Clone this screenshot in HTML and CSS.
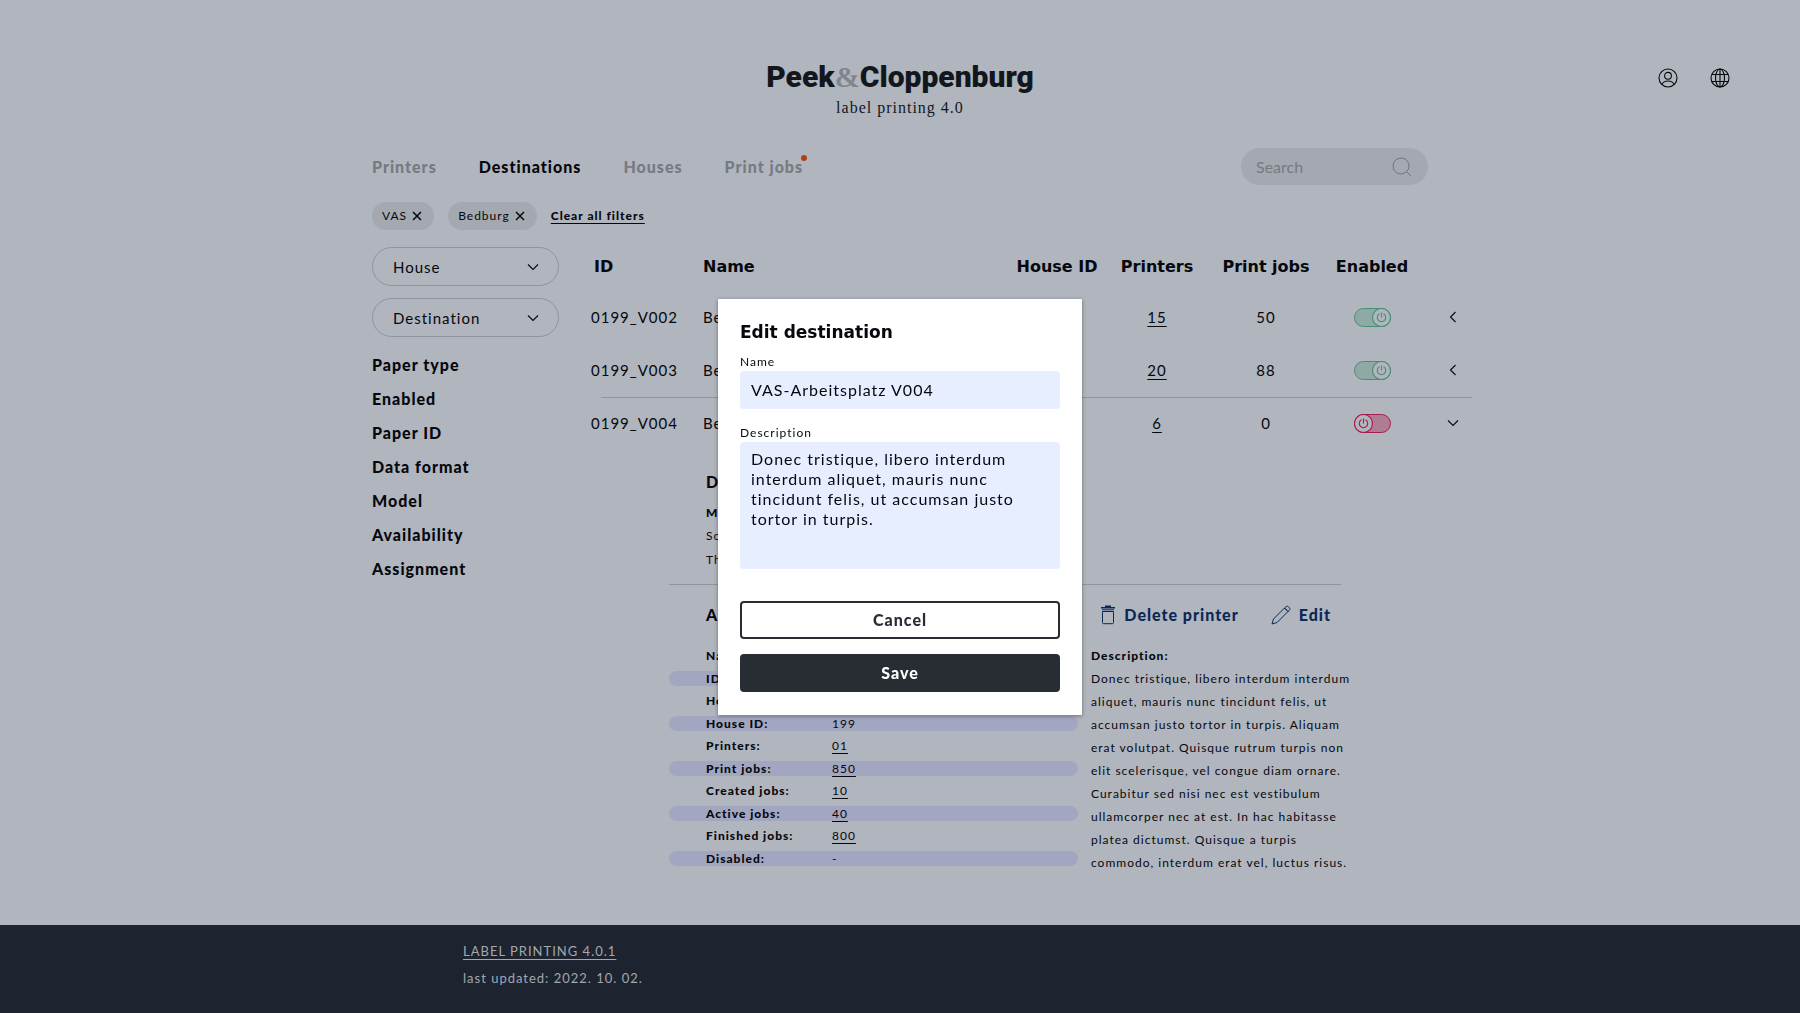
FILE: index.html
```html
<!DOCTYPE html>
<html lang="en">

<head>
    <meta charset="utf-8" />
    <meta name="viewport" content="width=device-width, initial-scale=1" />
    <title>Label printing 4.0</title>
    <link rel="stylesheet" href="styles.css">
</head>

<body>
    <header class="header">
        <div class="brand">
            <h1 class="logo">Peek<span class="amp">&amp;</span>Cloppenburg</h1>
            <p class="subtitle">label printing 4.0</p>
        </div>
        <div class="header-icons">
            <button class="icon-btn" aria-label="Account">
                <svg width="20" height="20" viewBox="0 0 20 20">
                    <circle cx="10" cy="10" r="9" />
                    <circle cx="10" cy="7.8" r="3.4" />
                    <path d="M4 16.6C5 14 7.3 13 10 13s5 1 6 3.6" />
                </svg>
            </button>
            <button class="icon-btn" aria-label="Language">
                <svg width="20" height="20" viewBox="0 0 20 20">
                    <circle cx="10" cy="10" r="9" />
                    <ellipse cx="10" cy="10" rx="4.5" ry="9" />
                    <path d="M10 1v18M2 6.5h16M2 13.5h16" />
                </svg>
            </button>
        </div>
    </header>

    <div class="container">
        <div class="topbar">
            <nav>
                <ul class="menu">
                    <li><a href="#">Printers</a></li>
                    <li><a href="#" class="active">Destinations</a></li>
                    <li><a href="#">Houses</a></li>
                    <li><a href="#" class="has-news">Print jobs</a></li>
                </ul>
            </nav>
            <div class="search">
                <input type="search" placeholder="Search" aria-label="Search">
                <svg width="20" height="20" viewBox="0 0 20 20">
                    <circle cx="9" cy="9" r="8" />
                    <path d="M14.5 14.5L19 19" />
                </svg>
            </div>
        </div>

        <div class="filters">
            <button class="chip">VAS <svg width="10" height="10" viewBox="0 0 10 10"><path d="M1 1l8 8M9 1l-8 8" /></svg></button>
            <button class="chip">Bedburg <svg width="10" height="10" viewBox="0 0 10 10"><path d="M1 1l8 8M9 1l-8 8" /></svg></button>
            <a href="#" class="clear">Clear all filters</a>
        </div>

        <div class="content">
            <aside class="sidebar">
                <div class="dropdown">
                    <select aria-label="House"><option>House</option></select>
                    <svg width="12" height="8" viewBox="0 0 12 8"><path d="M1 1.5l5 5 5-5" /></svg>
                </div>
                <div class="dropdown">
                    <select aria-label="Destination"><option>Destination</option></select>
                    <svg width="12" height="8" viewBox="0 0 12 8"><path d="M1 1.5l5 5 5-5" /></svg>
                </div>
                <ul class="facets">
                    <li>Paper type</li>
                    <li>Enabled</li>
                    <li>Paper ID</li>
                    <li>Data format</li>
                    <li>Model</li>
                    <li>Availability</li>
                    <li>Assignment</li>
                </ul>
            </aside>

            <main class="main">
                <table class="list">
                    <thead>
                        <tr>
                            <th class="col-id">ID</th>
                            <th class="col-name">Name</th>
                            <th class="col-house">House ID</th>
                            <th class="col-printers">Printers</th>
                            <th class="col-jobs">Print jobs</th>
                            <th class="col-enabled">Enabled</th>
                            <th class="col-open"></th>
                        </tr>
                    </thead>
                    <tbody>
                        <tr>
                            <td>0199_V002</td>
                            <td>Bedburg</td>
                            <td>199</td>
                            <td><a href="#">15</a></td>
                            <td>50</td>
                            <td>
                                <label class="toggle">
                                    <input type="checkbox" aria-label="Enabled" checked>
                                    <svg width="19" height="19" viewBox="0 0 19 19"><circle class="knob" cx="9.5" cy="9.5" r="9" /><path d="M7.5 5.8a4.2 4.2 0 1 0 4 0M9.5 4.5v5" /></svg>
                                </label>
                            </td>
                            <td><button class="open" aria-label="Open"><svg width="8" height="12" viewBox="0 0 8 12"><path d="M6.5 1l-5 5 5 5" /></svg></button></td>
                        </tr>
                        <tr>
                            <td>0199_V003</td>
                            <td>Bedburg</td>
                            <td>199</td>
                            <td><a href="#">20</a></td>
                            <td>88</td>
                            <td>
                                <label class="toggle">
                                    <input type="checkbox" aria-label="Enabled" checked>
                                    <svg width="19" height="19" viewBox="0 0 19 19"><circle class="knob" cx="9.5" cy="9.5" r="9" /><path d="M7.5 5.8a4.2 4.2 0 1 0 4 0M9.5 4.5v5" /></svg>
                                </label>
                            </td>
                            <td><button class="open" aria-label="Open"><svg width="8" height="12" viewBox="0 0 8 12"><path d="M6.5 1l-5 5 5 5" /></svg></button></td>
                        </tr>
                        <tr class="opened">
                            <td>0199_V004</td>
                            <td>Bedburg</td>
                            <td>199</td>
                            <td><a href="#">6</a></td>
                            <td>0</td>
                            <td>
                                <label class="toggle">
                                    <input type="checkbox" aria-label="Enabled">
                                    <svg width="19" height="19" viewBox="0 0 19 19"><circle class="knob" cx="9.5" cy="9.5" r="9" /><path d="M7.5 5.8a4.2 4.2 0 1 0 4 0M9.5 4.5v5" /></svg>
                                </label>
                            </td>
                            <td><button class="open down" aria-label="Close"><svg width="12" height="8" viewBox="0 0 12 8"><path d="M1 1.5l5 5 5-5" /></svg></button></td>
                        </tr>
                    </tbody>
                </table>

                <section class="details">
                    <div class="notice">
                        <h2>Disabled</h2>
                        <h3>Message:</h3>
                        <p>Scheduled</p>
                        <p>This week</p>
                    </div>

                    <div class="about-head">
                        <h2>About</h2>
                        <div class="actions">
                            <button>
                                <svg width="16" height="20" viewBox="0 0 16 20">
                                    <path d="M2.500 6.500v11a1.200 1.200 0 0 0 1.200 1.200h8.600a1.200 1.200 0 0 0 1.200-1.200v-11zM2 4.800h12" />
                                    <path class="lid" d="M1 2.800h14M5 1.300h6" />
                                </svg>
                                Delete printer
                            </button>
                            <button>
                                <svg width="20" height="20" viewBox="0 0 20 20">
                                    <path d="M1 19l1.500-5L13.500 3l3.500 3.500L6 17.500zM15 1.800c.8-.8 1.800-.8 2.500 0l.9.900c.7.700.7 1.700 0 2.500L17 6.500 13.500 3z" />
                                </svg>
                                Edit
                            </button>
                        </div>
                    </div>

                    <div class="about">
                        <dl class="facts">
                            <div><dt>Name:</dt><dd>VAS</dd></div>
                            <div><dt>ID:</dt><dd>004</dd></div>
                            <div><dt>House:</dt><dd>Bedburg</dd></div>
                            <div><dt>House ID:</dt><dd>199</dd></div>
                            <div><dt>Printers:</dt><dd><a href="#">01</a></dd></div>
                            <div><dt>Print jobs:</dt><dd><a href="#">850</a></dd></div>
                            <div><dt>Created jobs:</dt><dd><a href="#">10</a></dd></div>
                            <div><dt>Active jobs:</dt><dd><a href="#">40</a></dd></div>
                            <div><dt>Finished jobs:</dt><dd><a href="#">800</a></dd></div>
                            <div><dt>Disabled:</dt><dd>-</dd></div>
                        </dl>
                        <div class="description">
                            <h3>Description:</h3>
                            <p>Donec tristique, libero interdum interdum<br>
                                aliquet, mauris nunc tincidunt felis, ut<br>
                                accumsan justo tortor in turpis. Aliquam<br>
                                erat volutpat. Quisque rutrum turpis non<br>
                                elit scelerisque, vel congue diam ornare.<br>
                                Curabitur sed nisi nec est vestibulum<br>
                                ullamcorper nec at est. In hac habitasse<br>
                                platea dictumst. Quisque a turpis<br>
                                commodo, interdum erat vel, luctus risus.</p>
                        </div>
                    </div>
                </section>
            </main>
        </div>
    </div>

    <footer class="footer">
        <a href="#">LABEL PRINTING 4.0.1</a>
        <p>last updated: 2022. 10. 02.</p>
    </footer>

    <div class="overlay">
        <form class="modal" role="dialog" aria-labelledby="modal-title">
            <h2 id="modal-title">Edit destination</h2>
            <label for="name">Name</label>
            <input type="text" id="name" value="VAS-Arbeitsplatz V004">
            <label for="description">Description</label>
            <textarea id="description">Donec tristique, libero interdum interdum aliquet, mauris nunc tincidunt felis, ut accumsan justo tortor in turpis.</textarea>
            <button type="button" class="btn">Cancel</button>
            <button type="button" class="btn btn-dark">Save</button>
        </form>
    </div>
</body>

</html>
```

FILE: styles.css
```css
* {
    box-sizing: border-box;
}

body {
    margin: 0;
    min-height: 100vh;
    display: flex;
    flex-direction: column;
    background-color: #b1b5be;
    color: #05080d;
    font-family: Lato, "Noto Sans", sans-serif;
    font-size: 15px;
    line-height: 20px;
    letter-spacing: 1px;
}

h1,
h2,
h3,
p,
ul,
dl,
dd {
    margin: 0;
    padding: 0;
}

ul {
    list-style: none;
}

a {
    color: inherit;
    text-underline-offset: 3px;
}

button,
input,
select,
textarea {
    font: inherit;
    color: inherit;
    letter-spacing: inherit;
}

button {
    padding: 0;
    border: none;
    background: none;
    cursor: pointer;
}

svg {
    display: block;
    fill: none;
    stroke: currentColor;
    stroke-width: 1.1;
}

/* header */
.header {
    display: flex;
    justify-content: center;
    position: relative;
    padding-top: 56px;
}

.brand {
    text-align: center;
}

.logo {
    font-family: Roboto, sans-serif;
    font-size: 30px;
    font-weight: 900;
    line-height: 42px;
    letter-spacing: 0;
    color: #12171d;
}

.amp {
    font-family: "Liberation Serif", serif;
    font-weight: bold;
    color: #81868e;
}

.subtitle {
    font-family: "Liberation Serif", serif;
    font-size: 16px;
    color: #12171d;
}

.header-icons {
    position: absolute;
    top: 68px;
    right: 70px;
    display: flex;
    gap: 32px;
}

/* navigation and search */
.container {
    flex: 1;
    width: 1056px;
    max-width: 100%;
    margin: 0 auto;
    padding-top: 30px;
}

.topbar {
    display: flex;
    justify-content: space-between;
    align-items: center;
}

.menu {
    display: flex;
    gap: 42px;
}

.menu a {
    position: relative;
    font-size: 16px;
    font-weight: 900;
    color: #757a83;
    text-decoration: none;
}

.menu a.active {
    color: #05080d;
}

.has-news::after {
    content: "";
    position: absolute;
    top: -2px;
    right: -4px;
    width: 6px;
    height: 6px;
    border-radius: 50%;
    background-color: #b44012;
}

.search {
    display: flex;
    align-items: center;
    width: 187px;
    height: 37px;
    padding: 0 16px 0 15px;
    border-radius: 19px;
    background-color: #a4a8b0;
    color: #70757e;
}

.search input {
    flex: 1;
    min-width: 0;
    padding: 0;
    border: none;
    background: none;
    font-size: 16px;
    letter-spacing: 0;
}

.search input::placeholder {
    color: #757a83;
}

.search svg {
    stroke-width: 1;
}

.filters {
    display: flex;
    align-items: center;
    gap: 14px;
    margin-top: 17px;
    font-size: 12px;
}

.chip {
    display: flex;
    align-items: center;
    gap: 5px;
    height: 28px;
    padding: 0 12px 0 10px;
    border-radius: 14px;
    background-color: #a4a8b0;
}

.chip svg {
    stroke-width: 1.5;
}

.clear {
    font-weight: 900;
}

/* sidebar */
.content {
    display: flex;
    gap: 32px;
    margin-top: 17px;
}

.sidebar {
    width: 187px;
    flex-shrink: 0;
}

.dropdown {
    position: relative;
    margin-bottom: 12px;
}

.dropdown select {
    appearance: none;
    width: 100%;
    height: 39px;
    padding: 0 20px;
    border: 1px solid #90949d;
    border-radius: 20px;
    background: none;
}

.dropdown svg {
    position: absolute;
    top: 16px;
    right: 20px;
    pointer-events: none;
}

.facets {
    margin-top: -1px;
    font-size: 16px;
    font-weight: 900;
    line-height: 34px;
}

/* destinations table */
.main {
    flex: 1;
    margin-right: -44px;
}

.list {
    width: 100%;
    table-layout: fixed;
    border-collapse: collapse;
}

.list th {
    height: 43px;
    padding: 0 0 4px;
    font-family: "DejaVu Sans", sans-serif;
    font-size: 16px;
    font-weight: bold;
    letter-spacing: 0;
    white-space: nowrap;
}

.list .col-id {
    width: 112px;
    padding-left: 3px;
    text-align: left;
}

.list .col-name {
    text-align: left;
}

.col-house {
    width: 110px;
}

.col-printers {
    width: 90px;
}

.col-jobs {
    width: 128px;
}

.col-enabled {
    width: 84px;
}

.col-open {
    width: 58px;
}

.list td {
    height: 53px;
    padding: 0;
    text-align: center;
}

.list td:nth-child(-n+2) {
    text-align: left;
}

.opened {
    background: linear-gradient(#90949d, #90949d) 10px 1px / 100% 1px no-repeat;
}

.toggle {
    display: block;
    position: relative;
    width: 37px;
    height: 19px;
    margin: 2px auto 0;
    color: #a31f4e;
}

.toggle input {
    appearance: none;
    display: block;
    width: 37px;
    height: 19px;
    margin: 0;
    border: 1px solid #a31f4e;
    border-radius: 10px;
    background-color: #b07c94;
}

.toggle svg {
    position: absolute;
    top: 0;
    left: 0;
}

.knob {
    fill: #b1b5be;
}

.toggle:has(:checked) {
    color: #488f73;
}

.toggle input:checked {
    border-color: #488f73;
    background-color: #8faaa6;
}

.toggle input:checked + svg {
    left: auto;
    right: 0;
}

.open {
    display: block;
    margin: 0 15px 0 auto;
}

.open.down {
    margin-right: 13px;
}

/* opened destination */
.details {
    width: 672px;
    margin-left: 78px;
    font-size: 12px;
}

.details h2 {
    font-size: 16px;
    font-weight: 900;
}

.details h3 {
    font-size: 12px;
    line-height: 22px;
    font-weight: 900;
}

.notice {
    padding: 23px 37px 12px;
    border-bottom: 1px solid #90949d;
}

.notice h3 {
    margin-top: 10px;
}

.notice p {
    line-height: 24px;
}

.about-head {
    display: flex;
    justify-content: space-between;
    padding: 20px 10px 20px 37px;
}

.actions {
    display: flex;
    gap: 32px;
}

.actions button {
    display: flex;
    align-items: center;
    gap: 8px;
    font-size: 16px;
    font-weight: 900;
    color: #0a2858;
}

.actions svg {
    stroke-width: 1;
}

.actions .lid {
    stroke-width: 1.6;
}

.about {
    display: flex;
    gap: 13px;
}

.facts {
    flex: 0 0 409px;
}

.facts div {
    display: flex;
    height: 22px;
    padding-left: 37px;
    line-height: 22px;
}

.facts div:nth-child(even) {
    height: 15px;
    margin: 4px 0;
    border-radius: 8px;
    line-height: 15px;
    background-color: #a2a6c0;
}

.facts dt {
    width: 126px;
    font-weight: 900;
}

.description {
    line-height: 23px;
    white-space: nowrap;
}

/* footer */
.footer {
    height: 88px;
    padding: 16px 0 0 463px;
    background-color: #1d232f;
    color: #a2a7b0;
    font-size: 13px;
}

.footer p {
    margin-top: 7px;
}

/* edit dialog */
.overlay {
    position: fixed;
    inset: 0;
    display: flex;
    align-items: center;
    justify-content: center;
}

.modal {
    display: flex;
    flex-direction: column;
    width: 364px;
    padding: 23px 22px;
    background-color: #fff;
    box-shadow: 0 1px 4px rgba(0, 0, 0, 0.4);
}

.modal h2 {
    margin-bottom: 11px;
    font-family: "DejaVu Sans", sans-serif;
    font-size: 17px;
    letter-spacing: 0;
}

.modal label {
    font-size: 12px;
    line-height: 18px;
}

.modal input,
.modal textarea {
    padding: 7px 11px;
    border: none;
    border-radius: 4px;
    background-color: #e7eeff;
    font-size: 16px;
}

.modal input {
    height: 38px;
    margin-bottom: 15px;
}

.modal textarea {
    height: 127px;
    margin-bottom: 32px;
    resize: none;
}

.btn {
    height: 38px;
    border: 2px solid #282d34;
    border-radius: 4px;
    color: #282d34;
    font-size: 16px;
    font-weight: 900;
}

.btn-dark {
    margin-top: 15px;
    background-color: #282d34;
    color: #fff;
}
```
